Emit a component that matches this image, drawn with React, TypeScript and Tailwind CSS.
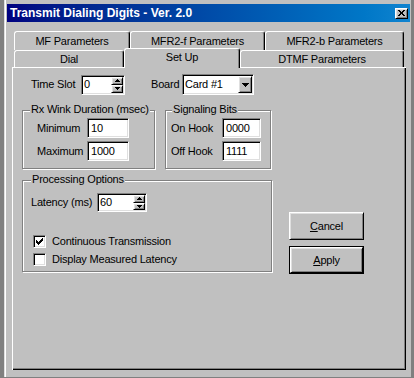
import React from 'react';

const sunken =
  'border border-t-[#808080] border-l-[#808080] border-r-white border-b-white shadow-[inset_1px_1px_0_#000,inset_-1px_-1px_0_#dfdfdf]';
const raised =
  'border border-t-white border-l-white border-r-black border-b-black shadow-[inset_1px_1px_0_#dfdfdf,inset_-1px_-1px_0_#808080]';
const tab =
  'flex items-center justify-center border-l border-t border-r border-l-white border-t-white border-r-black rounded-t-[3px] shadow-[inset_-1px_0_0_#808080] bg-[#c0c0c0]';
const group = 'relative border border-[#808080] shadow-[1px_1px_0_#fff,inset_1px_1px_0_#fff]';

function Arrow({ up }: { up?: boolean }) {
  return (
    <svg width="5" height="3" viewBox="0 0 5 3" shapeRendering="crispEdges">
      {up ? <path d="M2 0h1v1h1v1h1v1H0V2h1V1h1z" fill="#000" /> : <path d="M0 0h5v1H4v1H3v1H2V2H1V1H0z" fill="#000" />}
    </svg>
  );
}

function Spin({ value, className }: { value: string; className: string }) {
  return (
    <div className={`${sunken} bg-white flex p-[1px] ${className}`}>
      <div className="flex-1 flex items-center pl-[1px]">{value}</div>
      <div className="flex flex-col w-[12px]">
        <div className={`${raised} bg-[#c0c0c0] flex-1 flex items-center justify-center`}>
          <Arrow up />
        </div>
        <div className={`${raised} bg-[#c0c0c0] flex-1 flex items-center justify-center`}>
          <Arrow />
        </div>
      </div>
    </div>
  );
}

function Field({ value, className }: { value: string; className: string }) {
  return <div className={`${sunken} bg-white flex items-center pl-[3px] ${className}`}>{value}</div>;
}

function Check({ checked, label }: { checked?: boolean; label: string }) {
  return (
    <div className="flex items-center h-[13px] ml-[2px]">
      <div className={`${sunken} bg-white w-[13px] h-[13px] flex items-center justify-center`}>
        {checked && (
          <svg width="7" height="7" viewBox="0 0 7 7" shapeRendering="crispEdges">
            <path
              d="M0 2h1v3H0zM1 3h1v3H1zM2 4h1v3H2zM3 3h1v3H3zM4 2h1v3H4zM5 1h1v3H5zM6 0h1v3H6z"
              fill="#000"
            />
          </svg>
        )}
      </div>
      <span className="ml-[6px]">{label}</span>
    </div>
  );
}

export default function App() {
  return (
    <div className="w-[414px] h-[378px] bg-[#808080] overflow-hidden font-['Liberation_Sans',Arial,sans-serif] text-[11px] tracking-[-0.2px] text-black leading-[13px]">
      <div className="ml-[4px] w-[407px] h-[377px] bg-[#c0c0c0] border-l border-l-[#dfdfdf] shadow-[inset_1px_0_0_#fff] pt-[4px]">
        {/* title bar */}
        <div className="ml-[2px] w-[403px] h-[18px] bg-linear-to-r from-[#000080] to-[#1084d0] flex items-center justify-between pl-[3px] pr-[2px]">
          <span className="text-white font-bold text-[12px] tracking-normal">Transmit Dialing Digits - Ver. 2.0</span>
          <div className={`${raised} bg-[#c0c0c0] w-[13px] h-[11px] flex items-center justify-center`}>
            <svg width="7" height="6" viewBox="0 0 7 6" shapeRendering="crispEdges">
              <path d="M0 0h2v1h1v1h1V1h1V0h2v1H6v1H5v2h1v1h1v1H5V5H4V4H3v1H2v1H0V5h1V4h1V2H1V1H0z" fill="#000" />
            </svg>
          </div>
        </div>

        {/* tabs */}
        <div className="mt-[9px] ml-[7px]">
          <div className="flex h-[19px] pl-[2px]">
            <div className={`${tab} w-[116px] h-[19px]`}>MF Parameters</div>
            <div className={`${tab} w-[135px] h-[19px]`}>MFR2-f Parameters</div>
            <div className={`${tab} w-[139px] h-[19px]`}>MFR2-b Parameters</div>
          </div>
          <div className="flex items-end h-[17px] pl-[2px]">
            <div className={`${tab} w-[110px] h-[17px]`}>Dial</div>
            <div className={`${tab} w-[116px] h-[20px] -mb-[1px] relative z-10 pb-[3px]`}>Set Up</div>
            <div className={`${tab} w-[164px] h-[17px]`}>DTMF Parameters</div>
          </div>

          {/* panel */}
          <div className="w-[394px] h-[303px] shadow-[inset_1px_1px_0_#fff,inset_-1px_-1px_0_#000,inset_-2px_-2px_0_#808080] pt-[7px] pl-[10px]">
            <div className="flex items-center h-[21px] pl-[9px]">
              <span className="w-[50px]">Time Slot</span>
              <Spin value="0" className="w-[44px] h-[20px]" />
              <span className="ml-[26px] w-[31px]">Board</span>
              <div className={`${sunken} bg-white flex p-[1px] w-[72px] h-[21px]`}>
                <div className="flex-1 flex items-center pl-[1px]">Card #1</div>
                <div className={`${raised} bg-[#c0c0c0] w-[14px] flex items-center justify-center`}>
                  <svg width="7" height="4" viewBox="0 0 7 4" shapeRendering="crispEdges">
                    <path d="M0 0h7v1H6v1H5v1H4v1H3V3H2V2H1V1H0z" fill="#000" />
                  </svg>
                </div>
              </div>
            </div>

            <div className="flex gap-[10px] mt-[15px]">
              <div className={`${group} w-[133px] h-[59px] pt-[7px] pl-[14px]`}>
                <span className="absolute left-[7px] -top-[8px] bg-[#c0c0c0] px-[1px]">Rx Wink Duration (msec)</span>
                <div className="flex items-center">
                  <span className="w-[50px]">Minimum</span>
                  <Field value="10" className="w-[42px] h-[20px]" />
                </div>
                <div className="flex items-center mt-[3px]">
                  <span className="w-[50px]">Maximum</span>
                  <Field value="1000" className="w-[42px] h-[20px]" />
                </div>
              </div>
              <div className={`${group} w-[106px] h-[59px] pt-[7px] pl-[5px]`}>
                <span className="absolute left-[6px] -top-[8px] bg-[#c0c0c0] px-[1px]">Signaling Bits</span>
                <div className="flex items-center">
                  <span className="w-[51px]">On Hook</span>
                  <Field value="0000" className="w-[39px] h-[20px]" />
                </div>
                <div className="flex items-center mt-[3px]">
                  <span className="w-[51px]">Off Hook</span>
                  <Field value="1111" className="w-[39px] h-[20px]" />
                </div>
              </div>
            </div>

            <div className="flex mt-[11px]">
              <div className={`${group} w-[250px] h-[92px] pt-[12px] pl-[8px]`}>
                <span className="absolute left-[8px] -top-[8px] bg-[#c0c0c0] px-[1px]">Processing Options</span>
                <div className="flex items-center">
                  <span className="w-[66px]">Latency (ms)</span>
                  <Spin value="60" className="w-[50px] h-[19px]" />
                </div>
                <div className="mt-[23px]">
                  <Check checked label="Continuous Transmission" />
                </div>
                <div className="mt-[5px]">
                  <Check label="Display Measured Latency" />
                </div>
              </div>
              <div className="ml-[17px] pt-[32px] flex flex-col">
                <button className={`${raised} bg-[#c0c0c0] w-[75px] h-[28px] flex items-center justify-center`}>
                  <span>
                    <u>C</u>ancel
                  </span>
                </button>
                <div className="mt-[6px] w-[75px] h-[28px] border border-black">
                  <button className={`${raised} bg-[#c0c0c0] w-full h-full flex items-center justify-center`}>
                    <span>
                      <u>A</u>pply
                    </span>
                  </button>
                </div>
              </div>
            </div>
          </div>
        </div>
      </div>
    </div>
  );
}
